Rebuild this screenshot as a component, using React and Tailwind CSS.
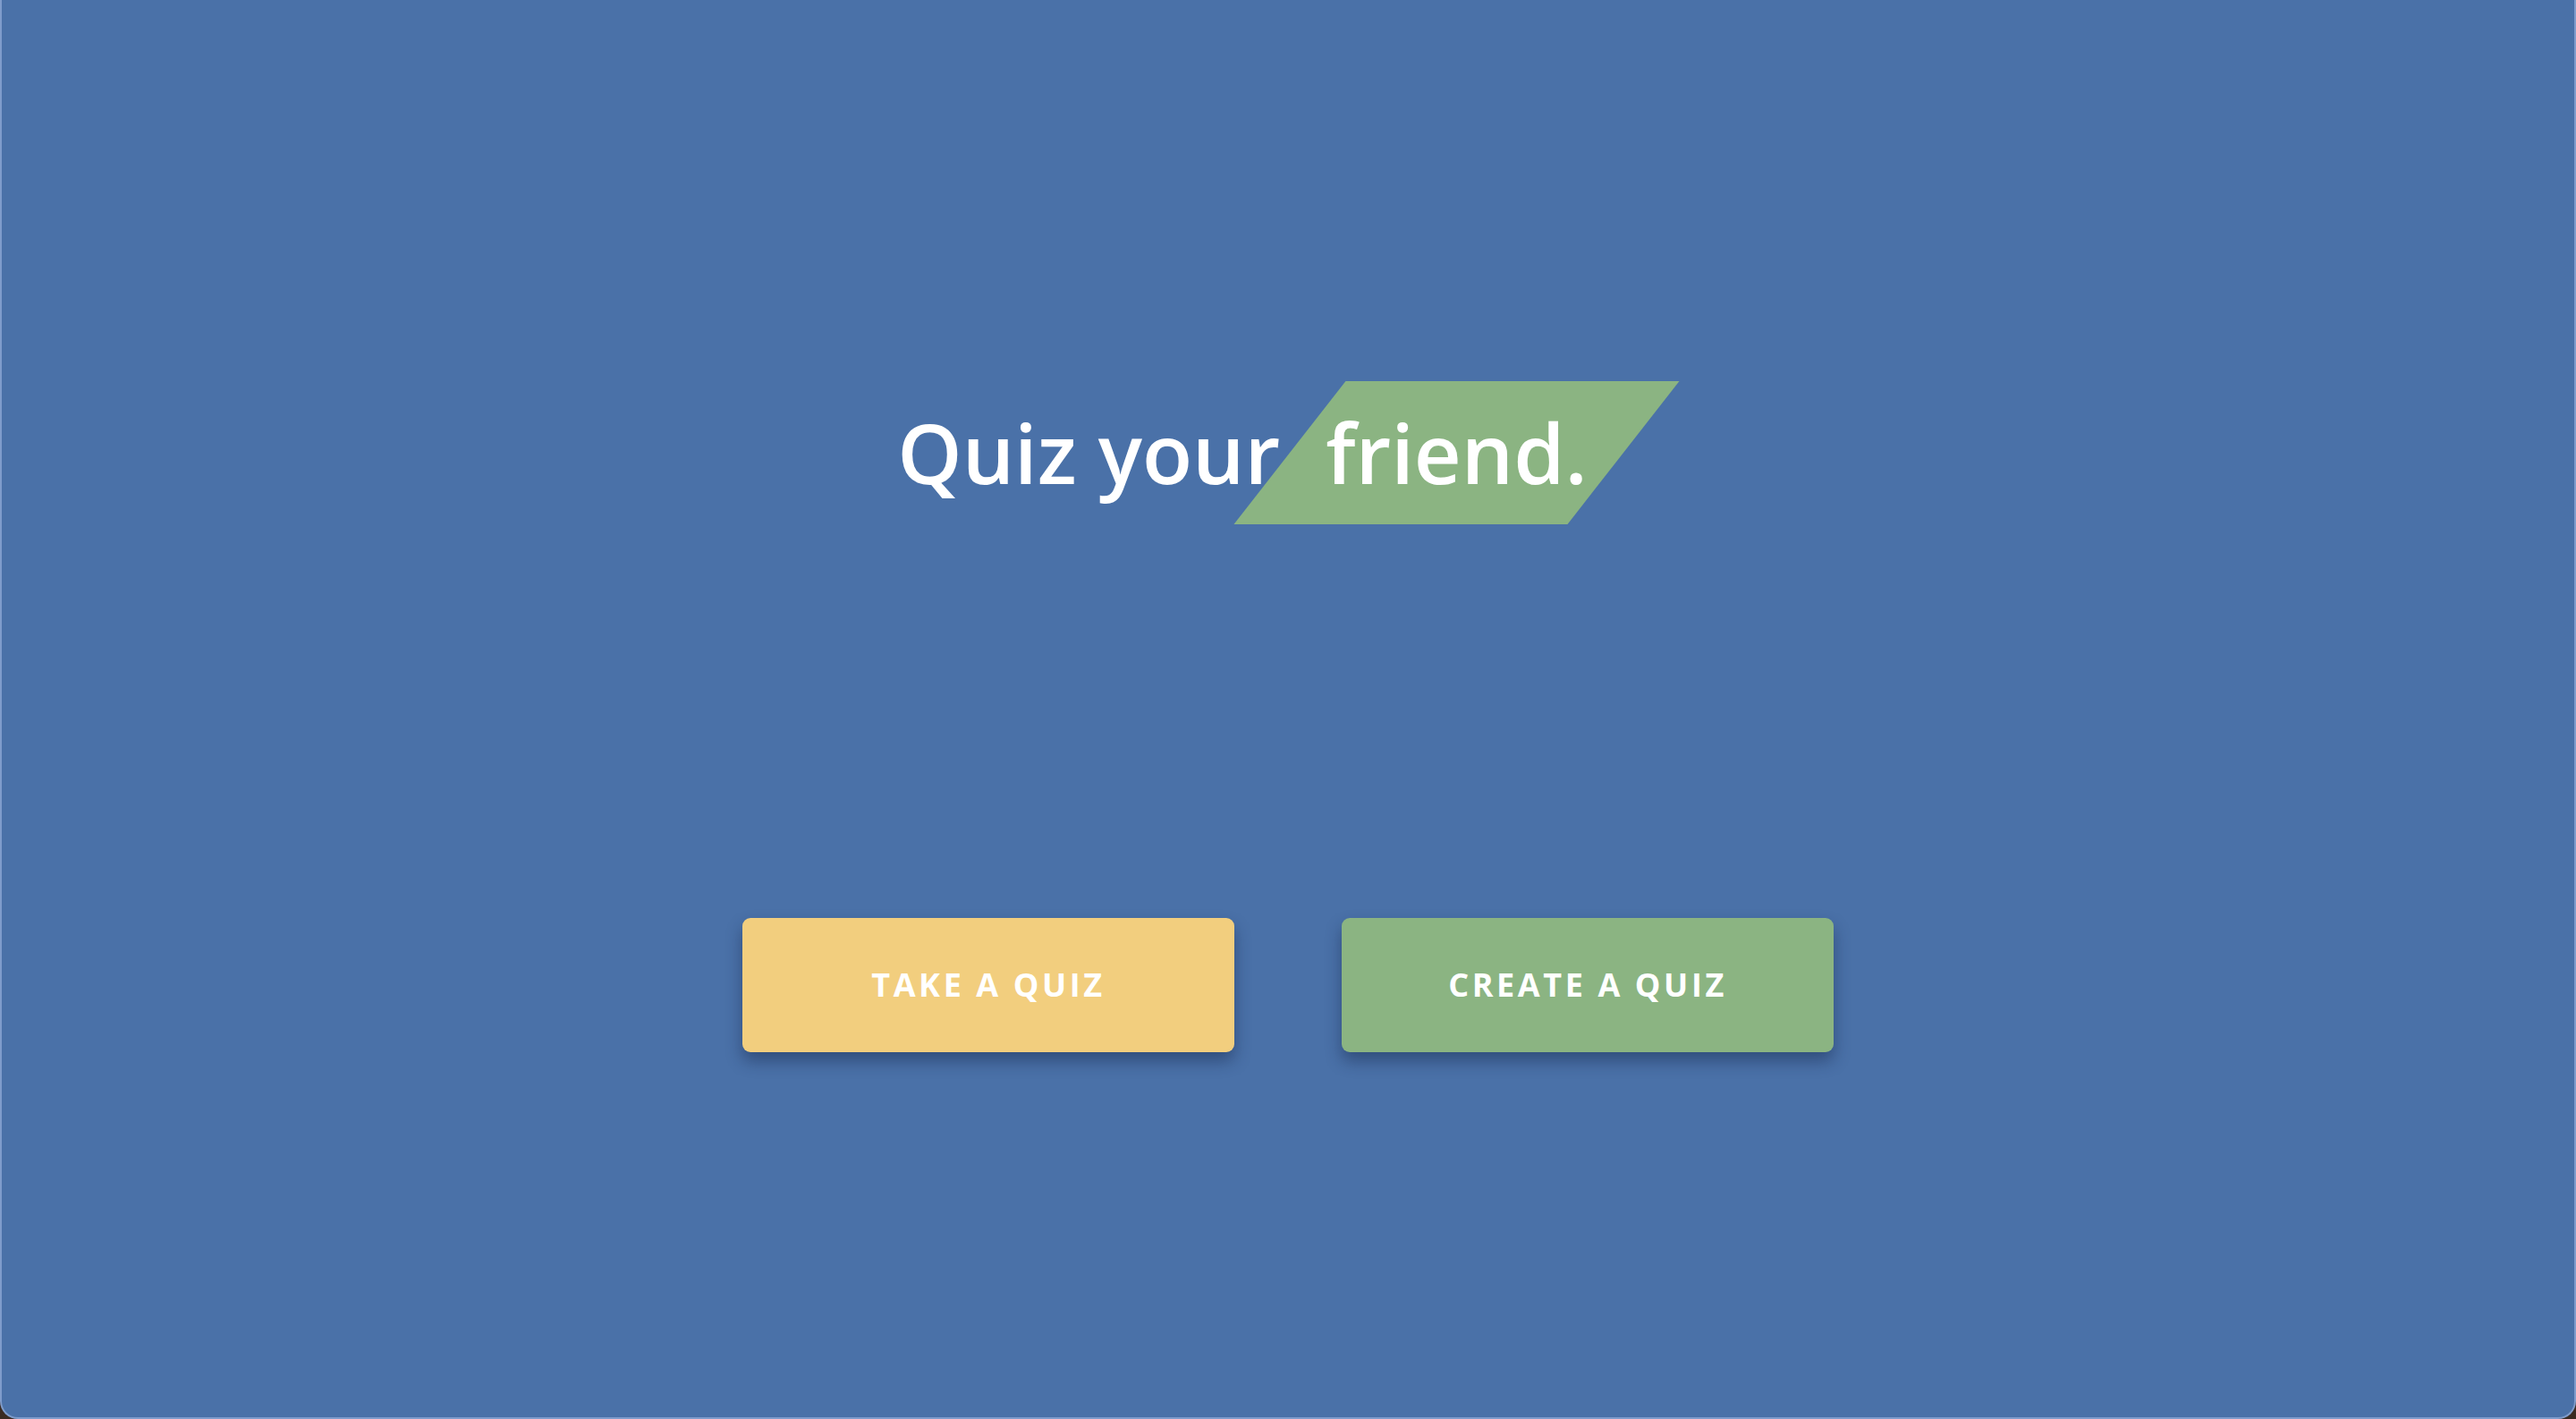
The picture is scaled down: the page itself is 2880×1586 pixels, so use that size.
import React from "react";

const font = { fontFamily: "'Open Sans', 'Noto Sans', sans-serif" };

const QuizButton = ({ label, color }) => {
  return (
    <button
      style={font}
      className={`${color} w-[550px] h-[150px] rounded-[9px] text-white font-bold text-[36px] tracking-[0.1em] uppercase shadow-[0_10px_18px_rgba(20,35,70,0.45)]`}
    >
      {label}
    </button>
  );
};

const App = () => {
  return (
    <div className="w-full h-[1586px] bg-[#3b2b22]">
      <div className="h-full bg-[#4a71a8] rounded-b-[20px] border-l-2 border-r-2 border-b-2 border-[#7f9ccb] flex flex-col items-center">
        <h1
          style={font}
          className="mt-[426px] mr-[62px] text-white font-semibold text-[92px] leading-none flex items-center"
        >
          <span>Quiz your</span>
          <span className="relative ml-[11px] px-[40px] py-[34px]">
            <span className="absolute inset-0 bg-[#8bb482] -skew-x-[38deg]"></span>
            <span className="relative">friend.</span>
          </span>
        </h1>
        <div className="mt-[440px] flex gap-[120px]">
          <QuizButton label="Take a quiz" color="bg-[#f2ce7e]" />
          <QuizButton label="Create a quiz" color="bg-[#8bb482]" />
        </div>
      </div>
    </div>
  );
};

export default App;
